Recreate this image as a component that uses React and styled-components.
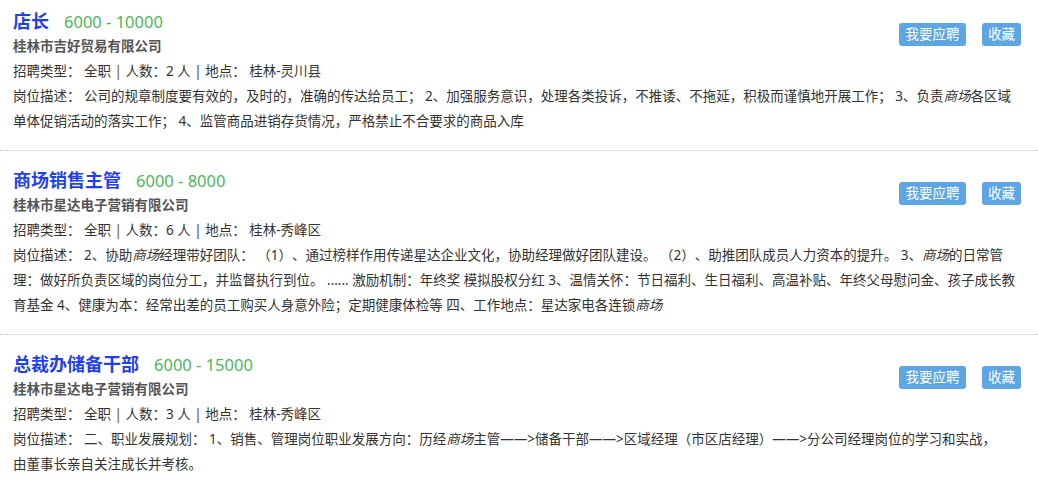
import React from 'react';
import styled, { createGlobalStyle } from 'styled-components';

const jobs = [
  {
    title: '店长',
    salary: '6000 - 10000',
    company: '桂林市吉好贸易有限公司',
    type: '全职',
    count: 2,
    place: '桂林-灵川县',
    desc: [
      '公司的规章制度要有效的，及时的，准确的传达给员工； 2、加强服务意识，处理各类投诉，不推诿、不拖延，积极而谨慎地开展工作； 3、负责',
      { em: '商场' },
      '各区域单体促销活动的落实工作； 4、监管商品进销存货情况，严格禁止不合要求的商品入库',
    ],
  },
  {
    title: '商场销售主管',
    salary: '6000 - 8000',
    company: '桂林市星达电子营销有限公司',
    type: '全职',
    count: 6,
    place: '桂林-秀峰区',
    desc: [
      '2、协助',
      { em: '商场' },
      '经理带好团队： （1）、通过榜样作用传递星达企业文化，协助经理做好团队建设。 （2）、助推团队成员人力资本的提升。 3、',
      { em: '商场' },
      '的日常管理：做好所负责区域的岗位分工，并监督执行到位。 ...... 激励机制：年终奖 模拟股权分红 3、温情关怀：节日福利、生日福利、高温补贴、年终父母慰问金、孩子成长教育基金 4、健康为本：经常出差的员工购买人身意外险；定期健康体检等 四、工作地点：星达家电各连锁',
      { em: '商场' },
    ],
  },
  {
    title: '总裁办储备干部',
    salary: '6000 - 15000',
    company: '桂林市星达电子营销有限公司',
    type: '全职',
    count: 3,
    place: '桂林-秀峰区',
    desc: [
      '二、职业发展规划： 1、销售、管理岗位职业发展方向：历经',
      { em: '商场' },
      '主管——>储备干部——>区域经理（市区店经理）——>分公司经理岗位的学习和实战，',
      { br: true },
      '由董事长亲自关注成长并考核。',
    ],
  },
];

const GlobalStyle = createGlobalStyle`
  body {
    margin: 0;
    background: #fff;
    font-family: "Noto Sans", "Noto Sans CJK SC", sans-serif;
    color: #333;
    text-spacing-trim: space-all;
  }
`;

const List = styled.div`
  width: 1038px;
`;

const Item = styled.div`
  padding: 16px 17px 16px 13px;
  border-bottom: 1px dotted #c8c8c8;
  &:first-child {
    padding-top: 8px;
  }
`;

const Head = styled.div`
  display: flex;
  align-items: flex-start;
  justify-content: space-between;
`;

const TitleRow = styled.div`
  display: flex;
  align-items: baseline;
  height: 26px;
  line-height: 26px;
`;

const Title = styled.span`
  font-size: 18px;
  font-weight: bold;
  color: #1f3ff0;
`;

const Salary = styled.span`
  margin-left: 15px;
  font-size: 16.5px;
  color: #4cb85a;
`;

const Company = styled.div`
  font-size: 13.5px;
  font-weight: bold;
  color: #555;
  line-height: 25px;
`;

const Line = styled.div`
  font-size: 13.5px;
  line-height: 25px;
  color: #333;
`;

const Bar = styled.span`
  color: ${(p) => p.$tint};
`;

const Actions = styled.div`
  display: flex;
  gap: 16px;
  margin-top: 15px;
`;

const Button = styled.button`
  height: 23px;
  padding: 0 ${(p) => (p.$narrow ? 6 : 6.5)}px;
  border: none;
  border-radius: 3px;
  background: #5ea6e3;
  color: #fff;
  font-family: inherit;
  font-size: 13.5px;
  line-height: 23px;
  cursor: pointer;
`;

const Desc = styled(Line)`
  em {
    font-style: italic;
  }
`;

const renderPart = (part, i) => {
  if (typeof part === 'string') return part;
  if (part.br) return <br key={i} />;
  return <em key={i}>{part.em}</em>;
};

const App = () => (
  <>
    <GlobalStyle />
    <List>
      {jobs.map((job) => (
        <Item key={job.title}>
          <Head>
            <div>
              <TitleRow>
                <Title>{job.title}</Title>
                <Salary>{job.salary}</Salary>
              </TitleRow>
              <Company>{job.company}</Company>
              <Line>
                招聘类型： {job.type} <Bar $tint="#7a4a1a">|</Bar> 人数：{job.count} 人{' '}
                <Bar $tint="#5a2a8a">|</Bar> 地点： {job.place}
              </Line>
            </div>
            <Actions>
              <Button>我要应聘</Button>
              <Button $narrow>收藏</Button>
            </Actions>
          </Head>
          <Desc>
            岗位描述： {job.desc.map(renderPart)}
          </Desc>
        </Item>
      ))}
    </List>
  </>
);

export default App;
